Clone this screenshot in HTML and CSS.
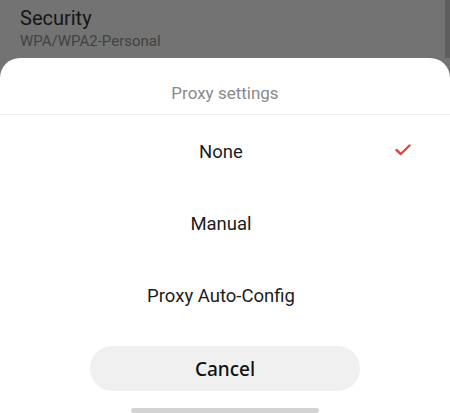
FILE: index.html
```html
<!DOCTYPE html>
<html lang="en">
<head>
    <meta charset="UTF-8">
    <title>Proxy settings</title>
    <link rel="stylesheet" href="styles.css">
</head>
<body>
  <div class="backdrop">
    <div class="pref">
      <div class="pref-title">Security</div>
      <div class="pref-summary">WPA/WPA2-Personal</div>
    </div>
  </div>

  <div class="sheet">
    <div class="sheet-title">Proxy settings</div>
    <div class="option selected">
      <span>None</span>
      <svg class="check" width="16" height="12" viewBox="0 0 16 12">
        <path d="M1.5 6 L5.8 10 L14.5 1.5" fill="none" stroke="#e0463f" stroke-width="2.4" stroke-linecap="round" stroke-linejoin="round"/>
      </svg>
    </div>
    <div class="option"><span>Manual</span></div>
    <div class="option"><span>Proxy Auto-Config</span></div>

    <button class="cancel">Cancel</button>
    <div class="home-bar"></div>
  </div>
</body>
</html>
```

FILE: styles.css
```css
body {
margin: 0;
height: 413px;
display: flex;
flex-direction: column;
background-color: #737373;
font-family: Roboto, "Noto Sans", sans-serif;
overflow: hidden;
}

.backdrop {
height: 59px;
display: flex;
border-right: 5px solid #5e5e5e;
}

.pref {
padding: 6px 0 0 20px;
}

.pref-title {
font-size: 20px;
line-height: 24px;
color: #161616;
}

.pref-summary {
margin-top: 2px;
font-size: 15px;
line-height: 18px;
color: #424242;
}

.sheet {
flex: 1;
display: flex;
flex-direction: column;
align-items: center;
background-color: #fff;
border-radius: 20px 20px 0 0;
}

.sheet-title {
align-self: stretch;
text-align: center;
font-size: 17px;
line-height: 20px;
color: #8a8a8a;
padding: 25px 0 11px;
border-bottom: 1px solid #ececec;
}

.option {
align-self: stretch;
height: 72px;
display: flex;
align-items: center;
justify-content: center;
padding: 2px 8px 0 0;
box-sizing: border-box;
position: relative;
font-size: 18.5px;
color: #1c1c1c;
}

.option .check {
position: absolute;
right: 39px;
top: 29px;
}

.cancel {
margin-top: 15px;
width: 270px;
height: 45px;
border: none;
border-radius: 23px;
background-color: #f0f0f0;
font-family: "Noto Sans", Roboto, sans-serif;
font-size: 19px;
font-weight: 500;
color: #111;
}

.home-bar {
margin-top: 17px;
width: 188px;
height: 5px;
border-radius: 3px;
background-color: #d3d3d3;
}
```
